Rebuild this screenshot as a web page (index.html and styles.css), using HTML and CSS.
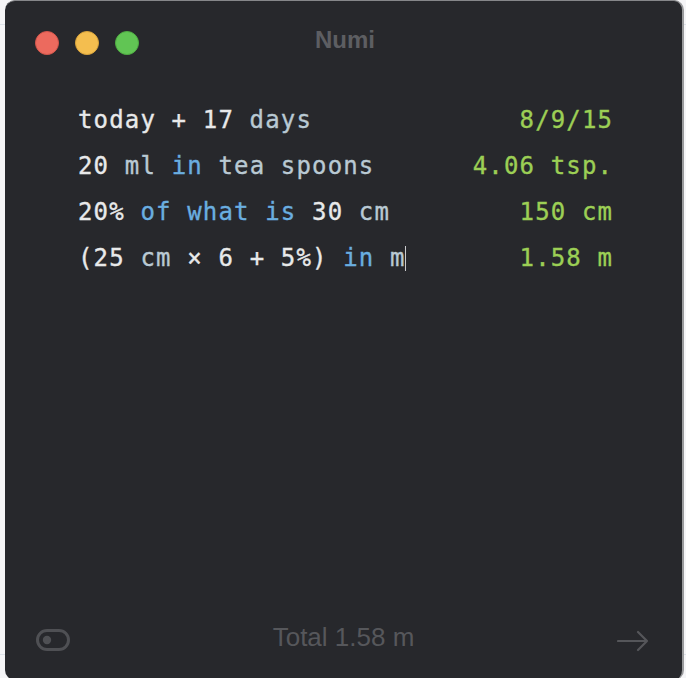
FILE: index.html
```html
<!DOCTYPE html>
<html lang="en">
<head>
<meta charset="utf-8">
<title>Numi</title>
<link rel="stylesheet" href="styles.css">
</head>
<body>
<div class="window">
  <header class="titlebar">
    <div class="lights">
      <span class="light red"></span>
      <span class="light yellow"></span>
      <span class="light green"></span>
    </div>
    <div class="title">Numi</div>
    <div></div>
  </header>
  <main class="sheet">
    <div class="row">
      <div class="expr"><span class="n">today + 17</span> <span class="u">days</span></div>
      <div class="res">8/9/15</div>
    </div>
    <div class="row">
      <div class="expr"><span class="n">20</span> <span class="u">ml</span> <span class="k">in</span> <span class="u">tea spoons</span></div>
      <div class="res">4.06 tsp.</div>
    </div>
    <div class="row">
      <div class="expr"><span class="n">20%</span> <span class="k">of what is</span> <span class="n">30</span> <span class="u">cm</span></div>
      <div class="res">150 cm</div>
    </div>
    <div class="row">
      <div class="expr"><span class="n">(25</span> <span class="u">cm</span> <span class="n">× 6 + 5%)</span> <span class="k">in</span> <span class="u">m</span><span class="cursor"></span></div>
      <div class="res">1.58 m</div>
    </div>
  </main>
  <footer class="footer">
    <div class="toggle-cell">
      <svg class="toggle" width="34" height="22" viewBox="0 0 34 22" aria-hidden="true">
        <rect x="1.5" y="1.5" width="31" height="19" rx="9.5" fill="none" stroke="#4f5054" stroke-width="3"/>
        <circle cx="11" cy="11" r="4.2" fill="#4f5054"/>
      </svg>
    </div>
    <div class="total">Total 1.58 m</div>
    <div class="arrow-cell">
      <svg class="arrow" width="32" height="22" viewBox="0 0 32 22" aria-hidden="true">
        <path d="M1 11 H30 M21 2 L30 11 L21 20" fill="none" stroke="#55565a" stroke-width="2.2" stroke-linecap="round" stroke-linejoin="round"/>
      </svg>
    </div>
  </footer>
</div>
</body>
</html>
```
FILE: styles.css
```css
html, body {
  margin: 0;
  padding: 0;
}
body {
  width: 686px;
  height: 678px;
  overflow: hidden;
  background:
    linear-gradient(#dde2e9, #dde2e9) 0 24px / 100% 1px no-repeat,
    linear-gradient(#dde2e9, #dde2e9) 0 654px / 100% 1px no-repeat,
    #f5f5f7;
}
.window {
  margin-left: 5px;
  width: 679px;
  height: 680px;
  box-sizing: border-box;
  background: #27282c;
  border-top: 1px solid #86878a;
  border-right: 2px solid #9a9b9d;
  border-radius: 10px;
  display: flex;
  flex-direction: column;
}
.titlebar {
  height: 83px;
  display: grid;
  grid-template-columns: 1fr auto 1fr;
  align-items: center;
}
.lights {
  display: flex;
  gap: 16px;
  padding-left: 30px;
}
.light {
  width: 24px;
  height: 24px;
  border-radius: 50%;
  box-sizing: border-box;
}
.red { background: #ec6a5e; border: 1px solid #d4564b; }
.yellow { background: #f4be4f; border: 1px solid #d9a43b; }
.green { background: #61c554; border: 1px solid #4fad42; }
.title {
  font-family: "Liberation Sans", Arial, sans-serif;
  font-weight: bold;
  font-size: 24px;
  color: #5d5e62;
  margin-bottom: 6px;
  margin-left: 3px;
}
.sheet {
  flex: 1;
  padding: 13px 70px 0 73px;
  font-family: "DejaVu Sans Mono", monospace;
  font-size: 24px;
  letter-spacing: 1.15px;
  line-height: 46px;
  color: #e6e7e8;
  -webkit-text-stroke: 0.35px currentColor;
}
.row {
  display: flex;
  justify-content: space-between;
  white-space: pre;
}
.res {
  color: #9ccf55;
  margin-right: -1.15px;
}
.n { color: #e8e9ea; }
.u { color: #b9c9d3; }
.k { color: #6aaee0; }
.cursor {
  display: inline-block;
  width: 0;
  height: 25px;
  border-left: 1.5px solid #c9cacc;
  vertical-align: -5px;
  margin-left: -1px;
  -webkit-text-stroke: 0;
}
.footer {
  height: 82px;
  display: grid;
  grid-template-columns: 1fr auto 1fr;
  align-items: center;
}
.toggle-cell {
  padding-left: 31px;
  display: flex;
  align-items: center;
  padding-top: 2px;
}
.total {
  font-family: "Liberation Sans", Arial, sans-serif;
  font-size: 26px;
  color: #56575b;
  margin-bottom: 4px;
}
.arrow-cell {
  display: flex;
  justify-content: flex-end;
  padding-right: 33px;
  padding-top: 4px;
}
```
